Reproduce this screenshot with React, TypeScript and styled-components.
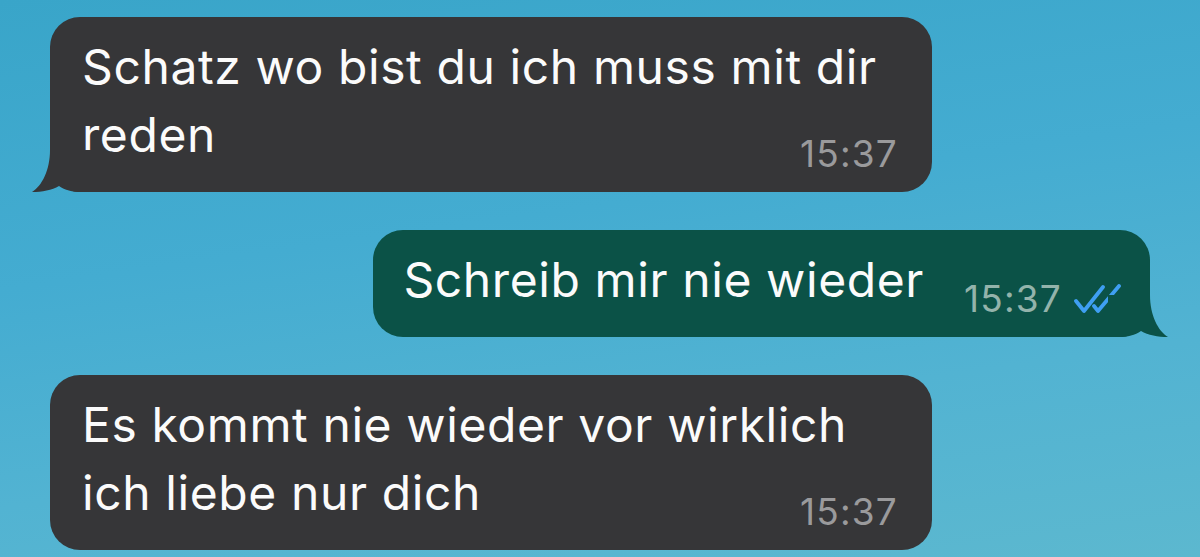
import React from "react";
import styled, { createGlobalStyle } from "styled-components";

const GlobalStyle = createGlobalStyle`
  html, body {
    margin: 0;
    padding: 0;
  }
  body {
    font-family: Inter, "Noto Sans", "Liberation Sans", sans-serif;
    -webkit-font-smoothing: antialiased;
  }
`;

const Screen = styled.div`
  width: 1200px;
  height: 557px;
  box-sizing: border-box;
  overflow: hidden;
  padding: 17px 50px 0 50px;
  display: flex;
  flex-direction: column;
  gap: 38px;
  background: linear-gradient(172deg, #39a5c9 0%, #44acd1 40%, #52b3d2 70%, #5cb8cf 100%);
`;

const Row = styled.div<{ $out?: boolean }>`
  display: flex;
  justify-content: ${(p) => (p.$out ? "flex-end" : "flex-start")};
`;

const Bubble = styled.div<{ $out?: boolean }>`
  position: relative;
  display: flow-root;
  max-width: 882px;
  box-sizing: border-box;
  border-radius: 30px;
  padding: ${(p) => (p.$out ? "16px 28px 16px 30px" : "16px 34px 16px 32px")};
  background: ${(p) => (p.$out ? "#0b5247" : "#363638")};
  color: #fbfbfb;
  font-size: 48px;
  line-height: 68px;
  letter-spacing: 0.6px;
`;

const Text = styled.span``;

const Meta = styled.span<{ $out?: boolean }>`
  float: right;
  display: flex;
  align-items: center;
  gap: 12px;
  margin: 31px 0 0 40px;
  font-size: 37px;
  line-height: 44px;
  letter-spacing: 1.2px;
  color: ${(p) => (p.$out ? "#93b3ab" : "#9a9a9c")};
  white-space: nowrap;
`;

const TailSvg = styled.svg<{ $out?: boolean }>`
  position: absolute;
  bottom: 0;
  width: 60px;
  height: 42px;
  ${(p) => (p.$out ? "right: -18px;" : "left: -18px;")}
`;

const Tail = ({ out }: { out?: boolean }) => (
  <TailSvg $out={out} viewBox="0 0 60 42">
    <path
      d={
        out
          ? "M42 0 C42 20 50 36 60 42 C50 42 40 40 33 36 C27 40 20 42 10 42 L0 42 L0 0 Z"
          : "M18 0 C18 20 10 36 0 42 C10 42 20 40 27 36 C33 40 40 42 50 42 L60 42 L60 0 Z"
      }
      fill={out ? "#0b5247" : "#363638"}
    />
  </TailSvg>
);

const Checks = () => (
  <svg width="48" height="30" viewBox="0 0 48 30">
    <g fill="none" stroke="#3f9ff2" strokeWidth="3.8" strokeLinecap="round" strokeLinejoin="round">
      <path d="M2 17 L10 27 L29 3" />
      <path d="M20 22 L24 27 L45 2" />
    </g>
  </svg>
);

export default function App() {
  return (
    <>
      <GlobalStyle />
      <Screen>
        <Row>
          <Bubble>
            <Tail />
            <Text>Schatz wo bist du ich muss mit dir reden</Text>
            <Meta>15:37</Meta>
          </Bubble>
        </Row>
        <Row $out>
          <Bubble $out>
            <Tail out />
            <Text>Schreib mir nie wieder</Text>
            <Meta $out>
              15:37
              <Checks />
            </Meta>
          </Bubble>
        </Row>
        <Row>
          <Bubble>
            <Text>Es kommt nie wieder vor wirklich ich liebe nur dich</Text>
            <Meta>15:37</Meta>
          </Bubble>
        </Row>
      </Screen>
    </>
  );
}
